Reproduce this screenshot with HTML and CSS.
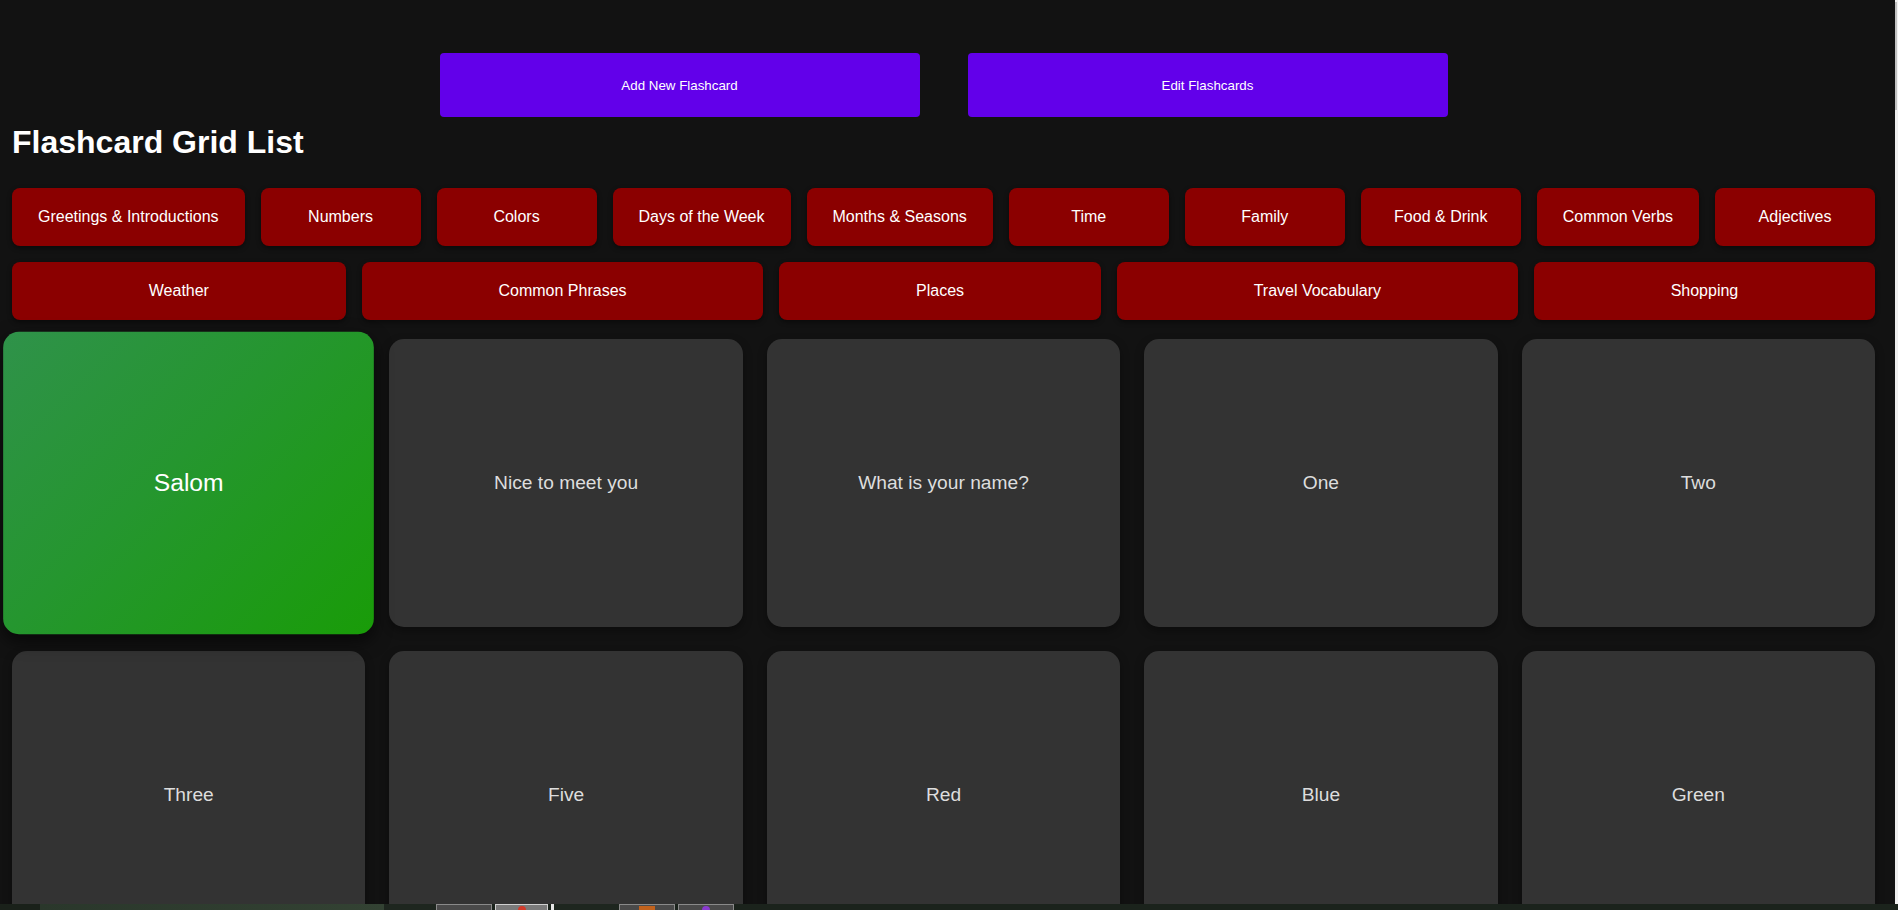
FILE: index.html
```html
<!DOCTYPE html>
<html lang="en">
<head>
<meta charset="utf-8">
<title>Flashcard Grid List</title>
<link rel="stylesheet" href="styles.css">
</head>
<body>
<div class="page">
  <div class="actions">
    <button class="action-btn">Add New Flashcard</button>
    <button class="action-btn">Edit Flashcards</button>
  </div>
  <h1 class="title">Flashcard Grid List</h1>
  <div class="categories">
    <button class="cat">Greetings &amp; Introductions</button>
    <button class="cat">Numbers</button>
    <button class="cat">Colors</button>
    <button class="cat">Days of the Week</button>
    <button class="cat">Months &amp; Seasons</button>
    <button class="cat">Time</button>
    <button class="cat">Family</button>
    <button class="cat">Food &amp; Drink</button>
    <button class="cat">Common Verbs</button>
    <button class="cat">Adjectives</button>
    <button class="cat">Weather</button>
    <button class="cat">Common Phrases</button>
    <button class="cat">Places</button>
    <button class="cat">Travel Vocabulary</button>
    <button class="cat">Shopping</button>
  </div>
  <div class="grid">
    <div class="card card-active">Salom</div>
    <div class="card">Nice to meet you</div>
    <div class="card">What is your name?</div>
    <div class="card">One</div>
    <div class="card">Two</div>
    <div class="card">Three</div>
    <div class="card">Five</div>
    <div class="card">Red</div>
    <div class="card">Blue</div>
    <div class="card">Green</div>
  </div>
</div>
<div class="scrollbar"><div class="scroll-thumb"></div></div>
<div class="taskbar">
  <div class="tb-a"></div>
  <div class="tb-b"></div>
  <div class="tb-c"></div>
  <div class="tb-thumb"></div>
  <div class="tb-thumb tb-light"><span class="dot dot-red"></span></div>
  <div class="tb-line"></div>
  <div class="tb-gap"></div>
  <div class="tb-thumb"><span class="sq-orange"></span></div>
  <div class="tb-thumb"><span class="dot dot-purple"></span></div>
  <div class="tb-rest"></div>
</div>
</body>
</html>
```

FILE: styles.css
```css
html, body {
  margin: 0;
  padding: 0;
  height: 100%;
  overflow: hidden;
  background: #121212;
}

body {
  font-family: "Liberation Sans", Arial, sans-serif;
  color: #ffffff;
}

.page {
  width: 1863px;
  margin-left: 12px;
}

.actions {
  display: flex;
  justify-content: center;
  gap: 48px;
  padding-top: 53px;
}

.action-btn {
  width: 480px;
  height: 64px;
  border: none;
  border-radius: 4px;
  background: #6200ea;
  color: #ffffff;
  font-family: "Liberation Sans", Arial, sans-serif;
  font-size: 13.333px;
  padding: 0;
}

.title {
  margin: 7px 0 27px 0;
  font-size: 32px;
  font-weight: bold;
  line-height: 37px;
  color: #ffffff;
}

.categories {
  display: flex;
  flex-wrap: wrap;
  gap: 16px;
}

.cat {
  flex: 1 1 auto;
  min-width: 160px;
  box-sizing: border-box;
  padding: 20px 24px;
  border: none;
  border-radius: 8px;
  background: #8b0000;
  color: #ffffff;
  font-family: "Liberation Sans", Arial, sans-serif;
  font-size: 16px;
  line-height: 18px;
  white-space: nowrap;
  box-shadow: 0 2px 5px rgba(0, 0, 0, 0.45);
}

.grid {
  display: grid;
  grid-template-columns: repeat(5, 1fr);
  gap: 24px;
  margin-top: 19px;
}

.card {
  height: 288px;
  display: flex;
  align-items: center;
  justify-content: center;
  background: #333333;
  border-radius: 15px;
  color: #dddddd;
  font-size: 19.2px;
  box-shadow: 0 4px 10px rgba(0, 0, 0, 0.35);
}

.card-active {
  background: linear-gradient(135deg, #2f924a 0%, #25962f 45%, #199c08 100%);
  transform: scale(1.05);
  color: #ffffff;
  font-size: 23.5px;
  box-shadow: 0 6px 16px rgba(0, 0, 0, 0.6);
}

.scrollbar {
  position: fixed;
  top: 0;
  right: 0;
  width: 3px;
  height: 100%;
  background: #f0f0f0;
}

.scroll-thumb {
  width: 2px;
  height: 108px;
  margin-top: 2px;
  background: #c2c2c2;
}

.taskbar {
  position: fixed;
  left: 0;
  bottom: 0;
  width: 100%;
  height: 6px;
  display: flex;
  background: #1b231c;
}

.tb-a { width: 40px; background: #1a211a; }
.tb-b { width: 344px; background: linear-gradient(90deg, #2a372b, #334233); }
.tb-c { width: 52px; background: #1e261f; }
.tb-gap { width: 65px; background: #1e261f; }
.tb-rest { flex: 1; background: #1b231c; }

.tb-thumb {
  width: 56px;
  margin-right: 3px;
  box-sizing: border-box;
  border: 1px solid #8a8a8a;
  border-bottom: none;
  background: #4a4a4a;
  display: flex;
  justify-content: center;
}

.tb-light { background: #7a7a7a; border-color: #d0d0d0; width: 53px; }

.tb-line { width: 3px; margin-right: 0; background: #e6e6e6; }

.dot {
  width: 8px;
  height: 8px;
  border-radius: 50%;
  margin-top: 1px;
}

.dot-red { background: #d23a2a; }
.dot-purple { background: #8a3ad0; }

.sq-orange {
  width: 16px;
  height: 6px;
  margin-top: 1px;
  background: #c2621c;
}
```
